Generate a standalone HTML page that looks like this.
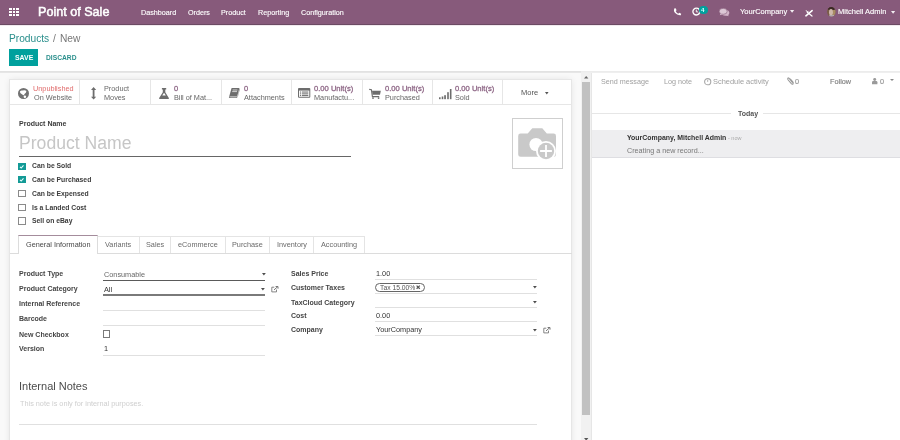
<!DOCTYPE html>
<html><head><meta charset="utf-8"><style>
html,body{margin:0;padding:0;width:900px;height:440px;overflow:hidden;background:#fff;position:relative;font-family:"Liberation Sans",sans-serif;}
.t{position:absolute;white-space:nowrap;line-height:1;will-change:transform;}
.r{position:absolute;}
svg{position:absolute;overflow:visible;}
</style></head><body>
<div class="r" style="left:0px;top:24px;width:900px;height:416px;background:#ffffff;"></div>
<div class="r" style="left:0px;top:0px;width:900px;height:24px;background:#875a7b;"></div>
<div class="r" style="left:0px;top:23.6px;width:900px;height:1.1px;background:#6b4a63;"></div>
<div class="r" style="left:0px;top:24.7px;width:900px;height:1px;background:#f1e9ee;"></div>
<div class="r" style="left:0px;top:71px;width:581px;height:1px;background:#e2e2e2;"></div>
<div class="r" style="left:0px;top:72px;width:581px;height:1px;background:#e6e6e6;"></div>
<div class="r" style="left:581px;top:71px;width:319px;height:1px;background:#ececec;"></div>
<div class="r" style="left:581px;top:72px;width:319px;height:1px;background:#efefef;"></div>
<div class="r" style="left:0px;top:73px;width:582px;height:367px;background:#f9f9f9;"></div>
<div class="r" style="left:9.2px;top:79px;width:563.3px;height:380px;background:#ffffff;border:1px solid #e6e6e6;box-sizing:border-box;box-shadow:0 0 7px -1px rgba(0,0,0,0.10);"></div>
<div class="r" style="left:581px;top:73px;width:10px;height:367px;background:#f1f1f1;"></div>
<div class="r" style="left:582px;top:82px;width:8px;height:333px;background:#c1c1c1;"></div>
<div class="r" style="left:591px;top:73px;width:309px;height:367px;background:#ffffff;border-left:1px solid #e6e6e6;box-sizing:border-box;"></div>
<div class="r" style="left:9.0px;top:8.0px;width:2.8px;height:2.2px;background:#ffffff;"></div>
<div class="r" style="left:9.0px;top:10.9px;width:2.8px;height:2.2px;background:#ffffff;"></div>
<div class="r" style="left:9.0px;top:13.8px;width:2.8px;height:2.2px;background:#ffffff;"></div>
<div class="r" style="left:12.6px;top:8.0px;width:2.8px;height:2.2px;background:#ffffff;"></div>
<div class="r" style="left:12.6px;top:10.9px;width:2.8px;height:2.2px;background:#ffffff;"></div>
<div class="r" style="left:12.6px;top:13.8px;width:2.8px;height:2.2px;background:#ffffff;"></div>
<div class="r" style="left:16.2px;top:8.0px;width:2.8px;height:2.2px;background:#ffffff;"></div>
<div class="r" style="left:16.2px;top:10.9px;width:2.8px;height:2.2px;background:#ffffff;"></div>
<div class="r" style="left:16.2px;top:13.8px;width:2.8px;height:2.2px;background:#ffffff;"></div>
<div class="t" style="left:38px;top:5.93px;font-size:12.6px;color:#ffffff;-webkit-text-stroke:0.5px #fff;">Point of Sale</div>
<div class="t" style="left:140.8px;top:8.81px;font-size:7.2px;color:#fff;-webkit-text-stroke:0.12px #fff;">Dashboard</div>
<div class="t" style="left:188px;top:8.81px;font-size:7.2px;color:#fff;-webkit-text-stroke:0.12px #fff;">Orders</div>
<div class="t" style="left:220.8px;top:8.81px;font-size:7.2px;color:#fff;-webkit-text-stroke:0.12px #fff;">Product</div>
<div class="t" style="left:257.9px;top:8.81px;font-size:7.2px;color:#fff;-webkit-text-stroke:0.12px #fff;">Reporting</div>
<div class="t" style="left:300.8px;top:8.81px;font-size:7.2px;color:#fff;-webkit-text-stroke:0.12px #fff;">Configuration</div>
<div class="t" style="left:739.7px;top:8.45px;font-size:7.5px;color:#fff;-webkit-text-stroke:0.12px #fff;">YourCompany</div>
<div class="t" style="left:837.7px;top:8.45px;font-size:7.5px;color:#fff;-webkit-text-stroke:0.12px #fff;">Mitchell Admin</div>
<div class="t" style="left:8.9px;top:33.77px;font-size:10.2px;color:#2a8f8c;">Products</div>
<div class="t" style="left:53.4px;top:33.77px;font-size:10.2px;color:#777;">/</div>
<div class="t" style="left:60.4px;top:33.77px;font-size:10.2px;color:#777;">New</div>
<div class="r" style="left:9px;top:49px;width:29px;height:17px;background:#00a09d;"></div>
<div class="t" style="left:14.8px;top:54.66px;font-size:6.9px;color:#ffffff;font-weight:700;">SAVE</div>
<div class="t" style="left:46px;top:54.83px;font-size:6.7px;color:#2a8f8c;font-weight:700;">DISCARD</div>
<div class="r" style="left:79.2px;top:80px;width:1px;height:24px;background:#e6e6e6;"></div>
<div class="r" style="left:150.3px;top:80px;width:1px;height:24px;background:#e6e6e6;"></div>
<div class="r" style="left:220.8px;top:80px;width:1px;height:24px;background:#e6e6e6;"></div>
<div class="r" style="left:291.3px;top:80px;width:1px;height:24px;background:#e6e6e6;"></div>
<div class="r" style="left:361.7px;top:80px;width:1px;height:24px;background:#e6e6e6;"></div>
<div class="r" style="left:431.8px;top:80px;width:1px;height:24px;background:#e6e6e6;"></div>
<div class="r" style="left:502.2px;top:80px;width:1px;height:24px;background:#e6e6e6;"></div>
<div class="r" style="left:10px;top:103.5px;width:562px;height:1px;background:#e6e6e6;"></div>
<div class="t" style="left:33.2px;top:84.82px;font-size:7.3px;color:#e06c6c;">Unpublished</div>
<div class="t" style="left:33.8px;top:93.52px;font-size:7.3px;color:#666;">On Website</div>
<div class="t" style="left:103.6px;top:84.82px;font-size:7.3px;color:#6a6a6a;">Product</div>
<div class="t" style="left:103.6px;top:93.52px;font-size:7.3px;color:#666;">Moves</div>
<div class="t" style="left:174.2px;top:84.65px;font-size:7.5px;color:#8f6887;-webkit-text-stroke:0.3px #8f6887;">0</div>
<div class="t" style="left:174.2px;top:93.52px;font-size:7.3px;color:#666;">Bill of Mat...</div>
<div class="t" style="left:244.2px;top:84.65px;font-size:7.5px;color:#8f6887;-webkit-text-stroke:0.3px #8f6887;">0</div>
<div class="t" style="left:244.2px;top:93.52px;font-size:7.3px;color:#666;">Attachments</div>
<div class="t" style="left:314.4px;top:84.57px;font-size:7.6px;color:#8f6887;-webkit-text-stroke:0.3px #8f6887;">0.00 Unit(s)</div>
<div class="t" style="left:314.4px;top:93.52px;font-size:7.3px;color:#666;">Manufactu...</div>
<div class="t" style="left:385px;top:84.57px;font-size:7.6px;color:#8f6887;-webkit-text-stroke:0.3px #8f6887;">0.00 Unit(s)</div>
<div class="t" style="left:385px;top:93.52px;font-size:7.3px;color:#666;">Purchased</div>
<div class="t" style="left:455.4px;top:84.57px;font-size:7.6px;color:#8f6887;-webkit-text-stroke:0.3px #8f6887;">0.00 Unit(s)</div>
<div class="t" style="left:455.4px;top:93.52px;font-size:7.3px;color:#666;">Sold</div>
<div class="t" style="left:521px;top:88.95px;font-size:7.5px;color:#555;">More</div>
<div class="t" style="left:18.7px;top:119.87px;font-size:7px;color:#3c3c3c;font-weight:700;">Product Name</div>
<div class="t" style="left:18.6px;top:135.10px;font-size:17.6px;color:#c6c6c6;">Product Name</div>
<div class="r" style="left:18.7px;top:155.8px;width:332.5px;height:1.5px;background:#666;"></div>
<div class="r" style="left:512px;top:118px;width:51px;height:51px;background:#fff;border:1px solid #cfcfcf;box-sizing:border-box;"></div>
<div class="r" style="left:18.3px;top:162.5px;width:7.4px;height:7.4px;background:#139a96;"></div>
<div class="t" style="left:31.8px;top:163.14px;font-size:6.8px;color:#3c3c3c;font-weight:700;">Can be Sold</div>
<div class="r" style="left:18.3px;top:176.0px;width:7.4px;height:7.4px;background:#139a96;"></div>
<div class="t" style="left:31.8px;top:176.84px;font-size:6.8px;color:#3c3c3c;font-weight:700;">Can be Purchased</div>
<div class="r" style="left:18.3px;top:189.8px;width:7.4px;height:7.4px;background:#fff;border:1px solid #8a8a8a;box-sizing:border-box;"></div>
<div class="t" style="left:31.8px;top:190.74px;font-size:6.8px;color:#3c3c3c;font-weight:700;">Can be Expensed</div>
<div class="r" style="left:18.3px;top:203.60000000000002px;width:7.4px;height:7.4px;background:#fff;border:1px solid #8a8a8a;box-sizing:border-box;"></div>
<div class="t" style="left:31.8px;top:204.84px;font-size:6.8px;color:#3c3c3c;font-weight:700;">Is a Landed Cost</div>
<div class="r" style="left:18.3px;top:217.3px;width:7.4px;height:7.4px;background:#fff;border:1px solid #8a8a8a;box-sizing:border-box;"></div>
<div class="t" style="left:31.8px;top:218.04px;font-size:6.8px;color:#3c3c3c;font-weight:700;">Sell on eBay</div>
<div class="r" style="left:9.5px;top:252.5px;width:562.5px;height:1px;background:#dcdcdc;"></div>
<div class="r" style="left:18.3px;top:235px;width:79.7px;height:18.5px;background:#fff;border:1px solid #dcdcdc;border-bottom:none;border-top:1px solid #a48c9c;box-sizing:border-box;"></div>
<div class="t" style="left:26px;top:241.12px;font-size:7.3px;color:#484848;">General Information</div>
<div class="r" style="left:98px;top:235.5px;width:41.599999999999994px;height:17.5px;background:#fff;border:1px solid #e4e4e4;border-left:none;border-bottom:none;box-sizing:border-box;"></div>
<div class="t" style="left:105px;top:241.12px;font-size:7.3px;color:#6a6a6a;">Variants</div>
<div class="r" style="left:139.6px;top:235.5px;width:31.400000000000006px;height:17.5px;background:#fff;border:1px solid #e4e4e4;border-left:none;border-bottom:none;box-sizing:border-box;"></div>
<div class="t" style="left:146.4px;top:241.12px;font-size:7.3px;color:#6a6a6a;">Sales</div>
<div class="r" style="left:171px;top:235.5px;width:54.5px;height:17.5px;background:#fff;border:1px solid #e4e4e4;border-left:none;border-bottom:none;box-sizing:border-box;"></div>
<div class="t" style="left:178.3px;top:241.12px;font-size:7.3px;color:#6a6a6a;">eCommerce</div>
<div class="r" style="left:225.5px;top:235.5px;width:44.5px;height:17.5px;background:#fff;border:1px solid #e4e4e4;border-left:none;border-bottom:none;box-sizing:border-box;"></div>
<div class="t" style="left:232px;top:241.12px;font-size:7.3px;color:#6a6a6a;">Purchase</div>
<div class="r" style="left:270px;top:235.5px;width:43.5px;height:17.5px;background:#fff;border:1px solid #e4e4e4;border-left:none;border-bottom:none;box-sizing:border-box;"></div>
<div class="t" style="left:277px;top:241.12px;font-size:7.3px;color:#6a6a6a;">Inventory</div>
<div class="r" style="left:313.5px;top:235.5px;width:51.89999999999998px;height:17.5px;background:#fff;border:1px solid #e4e4e4;border-left:none;border-bottom:none;box-sizing:border-box;"></div>
<div class="t" style="left:320.9px;top:241.12px;font-size:7.3px;color:#6a6a6a;">Accounting</div>
<div class="t" style="left:18.6px;top:269.77px;font-size:7px;color:#454545;font-weight:700;">Product Type</div>
<div class="t" style="left:18.6px;top:285.17px;font-size:7px;color:#454545;font-weight:700;">Product Category</div>
<div class="t" style="left:18.6px;top:300.17px;font-size:7px;color:#454545;font-weight:700;">Internal Reference</div>
<div class="t" style="left:18.6px;top:315.37px;font-size:7px;color:#454545;font-weight:700;">Barcode</div>
<div class="t" style="left:18.6px;top:330.57px;font-size:7px;color:#454545;font-weight:700;">New Checkbox</div>
<div class="t" style="left:18.6px;top:344.57px;font-size:7px;color:#454545;font-weight:700;">Version</div>
<div class="t" style="left:103.5px;top:270.82px;font-size:7.3px;color:#666;">Consumable</div>
<div class="r" style="left:103px;top:279.5px;width:162px;height:1.5px;background:#5a5a5a;"></div>
<div class="t" style="left:103.5px;top:286.12px;font-size:7.3px;color:#333;">All</div>
<div class="r" style="left:103px;top:294.3px;width:162px;height:2px;background:#7a7a7a;"></div>
<div class="r" style="left:103px;top:309.7px;width:162px;height:1px;background:#e0e0e0;"></div>
<div class="r" style="left:103px;top:325.2px;width:162px;height:1px;background:#e0e0e0;"></div>
<div class="r" style="left:102.7px;top:330.4px;width:7.8px;height:7.6px;background:#fff;border:1px solid #7a7a7a;box-sizing:border-box;"></div>
<div class="t" style="left:103.5px;top:344.82px;font-size:7.3px;color:#333;">1</div>
<div class="r" style="left:103px;top:355.2px;width:162px;height:1px;background:#e0e0e0;"></div>
<div class="t" style="left:290.6px;top:270.17px;font-size:7px;color:#454545;font-weight:700;">Sales Price</div>
<div class="t" style="left:290.6px;top:283.97px;font-size:7px;color:#454545;font-weight:700;">Customer Taxes</div>
<div class="t" style="left:290.6px;top:298.67px;font-size:7px;color:#454545;font-weight:700;">TaxCloud Category</div>
<div class="t" style="left:290.6px;top:312.17px;font-size:7px;color:#454545;font-weight:700;">Cost</div>
<div class="t" style="left:290.6px;top:325.97px;font-size:7px;color:#454545;font-weight:700;">Company</div>
<div class="t" style="left:375.5px;top:270.12px;font-size:7.3px;color:#333;">1.00</div>
<div class="r" style="left:375px;top:278.7px;width:161.5px;height:1px;background:#e0e0e0;"></div>
<div class="r" style="left:375.4px;top:282.6px;width:50px;height:9.7px;background:transparent;border:1px solid #666;border-radius:5px;box-sizing:border-box;"></div>
<div class="t" style="left:379.8px;top:284.59px;font-size:6.75px;color:#555;">Tax 15.00%</div>
<svg style="left:416.3px;top:285.4px" width="4.4" height="4.4" viewBox="0 0 4.4 4.4"><path d="M0.6,0.6 L3.8,3.8 M3.8,0.6 L0.6,3.8" stroke="#555" stroke-width="1.2"/></svg>
<div class="r" style="left:375px;top:292.7px;width:161.5px;height:1px;background:#e0e0e0;"></div>
<div class="r" style="left:375px;top:307.3px;width:161.5px;height:1px;background:#e0e0e0;"></div>
<div class="t" style="left:375.5px;top:312.12px;font-size:7.3px;color:#333;">0.00</div>
<div class="r" style="left:375px;top:321.2px;width:161.5px;height:1px;background:#e0e0e0;"></div>
<div class="t" style="left:375.5px;top:326.32px;font-size:7.3px;color:#333;">YourCompany</div>
<div class="r" style="left:375px;top:335.4px;width:161.5px;height:1px;background:#e0e0e0;"></div>
<div class="t" style="left:19.2px;top:380.69px;font-size:11px;color:#4c4c4c;">Internal Notes</div>
<div class="t" style="left:20px;top:400.12px;font-size:7.3px;color:#cfcfcf;">This note is only for internal purposes.</div>
<div class="r" style="left:18.7px;top:424.2px;width:518.5px;height:1px;background:#e0e0e0;"></div>
<div class="t" style="left:600.7px;top:78.11px;font-size:7.2px;color:#a0a0a0;">Send message</div>
<div class="t" style="left:664.3px;top:78.11px;font-size:7.2px;color:#a0a0a0;">Log note</div>
<div class="t" style="left:712.8px;top:77.89px;font-size:7.45px;color:#a0a0a0;">Schedule activity</div>
<div class="t" style="left:795px;top:78.02px;font-size:7.3px;color:#999;-webkit-text-stroke:0.2px #999;">0</div>
<div class="t" style="left:829.8px;top:77.82px;font-size:7.3px;color:#808080;-webkit-text-stroke:0.15px #808080;">Follow</div>
<div class="t" style="left:879.6px;top:78.02px;font-size:7.3px;color:#999;-webkit-text-stroke:0.2px #999;">0</div>
<div class="r" style="left:591px;top:112.7px;width:140px;height:1px;background:#e6e6e6;"></div>
<div class="r" style="left:763px;top:112.7px;width:137px;height:1px;background:#e6e6e6;"></div>
<div class="t" style="left:737.5px;top:110.37px;font-size:7.0px;color:#555;font-weight:700;">Today</div>
<div class="r" style="left:592px;top:130px;width:308px;height:27px;background:#eeeef0;"></div>
<div class="r" style="left:592px;top:156.5px;width:308px;height:1px;background:#dedee2;"></div>
<div class="t" style="left:626.6px;top:134.72px;font-size:6.95px;color:#333;font-weight:700;">YourCompany, Mitchell Admin</div>
<div class="t" style="left:727.6px;top:135.94px;font-size:5.5px;color:#aaa;">- now</div>
<div class="t" style="left:626.6px;top:146.51px;font-size:7.2px;color:#777;">Creating a new record...</div>
<svg style="left:672.5px;top:8px" width="8.5" height="7.5" viewBox="0 0 8.5 7.5"><path d="M1.2,0.6 L2.6,0.2 L3.6,2.3 L2.6,3.1 Q3.6,5 5.3,5.8 L6.2,4.8 L8.2,5.8 L7.8,7.2 Q4.2,7.6 1.9,4.8 Q0.4,2.7 1.2,0.6 Z" fill="#fff"/></svg>
<svg style="left:691.8px;top:6.9px" width="9" height="9" viewBox="0 0 9 9"><circle cx="4.3" cy="4.6" r="3.4" fill="none" stroke="#fff" stroke-width="1.3"/><path d="M4.3,2.6 V4.9 H6" fill="none" stroke="#fff" stroke-width="0.9"/></svg>
<div class="r" style="left:698.6px;top:5.7px;width:9.4px;height:8.3px;background:#00a09d;border-radius:4.2px;"></div>
<div class="t" style="left:701.3px;top:7.35px;font-size:6.2px;color:#d8ffff;font-weight:700;">4</div>
<svg style="left:719px;top:7.6px" width="10.5" height="8.5" viewBox="0 0 10.5 8.5"><ellipse cx="6.5" cy="4.8" rx="3.8" ry="2.9" fill="#d3b3c8"/><path d="M8.5,6.5 L10,8.3 L6.8,7.3 Z" fill="#d3b3c8"/><ellipse cx="4.2" cy="3.3" rx="4" ry="3" fill="#dcc6d5" stroke="#875a7b" stroke-width="0.6"/><path d="M1.8,5.2 L0.8,7.3 L4,6 Z" fill="#dcc6d5"/></svg>
<svg style="left:789.7px;top:10.3px" width="4.2" height="2.8" viewBox="0 0 4.2 2.8"><path d="M0,0 H4.2 L2.1,2.8 Z" fill="#f3eef2"/></svg>
<svg style="left:890.8px;top:10.5px" width="4.2" height="2.8" viewBox="0 0 4.2 2.8"><path d="M0,0 H4.2 L2.1,2.8 Z" fill="#f3eef2"/></svg>
<svg style="left:804.5px;top:8.5px" width="8" height="8" viewBox="0 0 8 8"><path d="M0.9,6.8 L7.1,1.6" stroke="#fff" stroke-width="1.6" stroke-linecap="round"/><path d="M2.3,3.2 L7,7" stroke="#fff" stroke-width="1.2" stroke-linecap="round"/><path d="M1,1.2 L2.4,3.1 L3.4,1.9" fill="none" stroke="#fff" stroke-width="0.9"/></svg>
<svg style="left:826.7px;top:6.6px" width="8.6" height="9.6" viewBox="0 0 8.6 9.6"><defs><clipPath id="av"><ellipse cx="4.3" cy="4.8" rx="4.3" ry="4.75"/></clipPath></defs><g clip-path="url(#av)"><rect width="9" height="10" fill="#7a5c48"/><rect x="5.6" y="2.5" width="4" height="8" fill="#a78c62"/><ellipse cx="4.5" cy="1" rx="4.2" ry="2.2" fill="#3a2824"/><ellipse cx="4" cy="5.2" rx="2" ry="3.2" fill="#cfb8aa"/><rect x="2.2" y="8.2" width="5" height="2" fill="#b9b4bd"/></g></svg>
<svg style="left:18px;top:88.1px" width="11" height="11" viewBox="0 0 11 11"><circle cx="5.5" cy="5.5" r="5.5" fill="#727272"/><path d="M1.9,3.5 Q3.2,1.9 4.8,2.6 Q6.8,1.7 8.4,3 Q8.3,5.1 6.5,6.1 Q5.8,7.9 5,7.1 Q3.5,6.3 2.3,5.1 Z" fill="#fff"/><circle cx="6.9" cy="8.7" r="1.25" fill="#fff"/></svg>
<svg style="left:90.9px;top:87.2px" width="5.2" height="12.6" viewBox="0 0 5.2 12.6"><path d="M2.6,0 L5.2,2.9 H3.5 V9.7 H5.2 L2.6,12.6 L0,9.7 H1.7 V2.9 H0 Z" fill="#6d6d6d"/></svg>
<svg style="left:158.9px;top:87.9px" width="10" height="11" viewBox="0 0 10 11"><path d="M2.9,0 H7.2 V1.6 H6.3 V4.2 L10,10.2 Q10,11 9.2,11 H0.8 Q0,11 0,10.2 L3.8,4.2 V1.6 H2.9 Z" fill="#6d6d6d"/><path d="M3.3,7.6 L4.6,5.3 H5.5 L6.8,7.6 Z" fill="#fff"/></svg>
<svg style="left:228.8px;top:88.4px" width="11.2" height="10.2" viewBox="0 0 11.2 10.2"><path d="M2.6,0 H10.4 L8.2,8.6 H0.2 Z" fill="#6d6d6d"/><path d="M0.2,8.6 H8.2 L8,10 H0.6 Q-0.6,9.4 0.2,8.6 Z" fill="#6d6d6d"/><path d="M1.2,9 H7.8" stroke="#fff" stroke-width="0.6"/><path d="M3.6,2 H8.4 M3.2,3.6 H8" stroke="#fff" stroke-width="0.7"/><path d="M10.4,0.6 L10.9,1 L8.7,9.6 L8.4,9.4" fill="#888"/></svg>
<svg style="left:298.1px;top:88.1px" width="12.3" height="9.8" viewBox="0 0 12.3 9.8"><rect x="0" y="0" width="12.3" height="9.8" rx="1" fill="#6d6d6d"/><rect x="1" y="2.6" width="10.3" height="6.2" fill="#fff"/><rect x="1.9" y="3.5" width="1.2" height="1.1" fill="#777"/><rect x="1.9" y="5.3" width="1.2" height="1.1" fill="#777"/><rect x="1.9" y="7" width="1.2" height="1.1" fill="#777"/><rect x="3.9" y="3.5" width="6.4" height="1.1" fill="#777"/><rect x="3.9" y="5.3" width="6.4" height="1.1" fill="#777"/><rect x="3.9" y="7" width="6.4" height="1.1" fill="#777"/></svg>
<svg style="left:368.8px;top:88.8px" width="12" height="10" viewBox="0 0 12 10"><path d="M0.2,0.4 L2.4,0.8 L3.4,7.6 H10.2" fill="none" stroke="#6d6d6d" stroke-width="1.1"/><path d="M3,1.8 H11.8 L11,5.8 H3.5 Z" fill="#6d6d6d"/><circle cx="4" cy="9.1" r="0.9" fill="#6d6d6d"/><circle cx="9.6" cy="9.1" r="0.9" fill="#6d6d6d"/></svg>
<svg style="left:438.8px;top:88.8px" width="12.6" height="10.2" viewBox="0 0 12.6 10.2"><rect x="0" y="8.3" width="1.6" height="1.9" fill="#6d6d6d"/><rect x="2.7" y="7.5" width="1.6" height="2.7" fill="#6d6d6d"/><rect x="5.2" y="6.2" width="1.7" height="4" fill="#6d6d6d"/><rect x="8.2" y="3.2" width="1.6" height="7" fill="#6d6d6d"/><rect x="10.9" y="0" width="1.6" height="10.2" fill="#6d6d6d"/></svg>
<svg style="left:545px;top:92.2px" width="3.6" height="2.4" viewBox="0 0 3.6 2.4"><path d="M0,0 H3.6 L1.8,2.4 Z" fill="#555"/></svg>
<svg style="left:518px;top:128px" width="40" height="34" viewBox="0 0 40 34"><path d="M14.3,0.2 H24.3 L28.8,5.6 H35.6 Q38,5.6 38,8 V26.4 Q38,28.8 35.6,28.8 H2.6 Q0.2,28.8 0.2,26.4 V8 Q0.2,5.6 2.6,5.6 H9.7 Z" fill="#c9c9c9"/><circle cx="18" cy="16.5" r="6.6" fill="#fff"/><circle cx="28" cy="23" r="10" fill="#fff"/><circle cx="28" cy="23" r="8.2" fill="#c9c9c9"/><path d="M28,17.1 V28.9 M22.1,23 H33.9" stroke="#fff" stroke-width="1.8"/></svg>
<svg style="left:18.3px;top:162.5px" width="7.4" height="7.4" viewBox="0 0 7.4 7.4"><path d="M2,3.8 L3.2,5 L5.5,2.4" fill="none" stroke="#e8fffe" stroke-width="1.1"/></svg>
<svg style="left:18.3px;top:176.0px" width="7.4" height="7.4" viewBox="0 0 7.4 7.4"><path d="M2,3.8 L3.2,5 L5.5,2.4" fill="none" stroke="#e8fffe" stroke-width="1.1"/></svg>
<svg style="left:261.6px;top:272.8px" width="3.8" height="2.4" viewBox="0 0 3.8 2.4"><path d="M0,0 H3.8 L1.9,2.4 Z" fill="#4c4c4c"/></svg>
<svg style="left:261.4px;top:288.2px" width="3.8" height="2.4" viewBox="0 0 3.8 2.4"><path d="M0,0 H3.8 L1.9,2.4 Z" fill="#4c4c4c"/></svg>
<svg style="left:532.7px;top:286.1px" width="3.8" height="2.4" viewBox="0 0 3.8 2.4"><path d="M0,0 H3.8 L1.9,2.4 Z" fill="#4c4c4c"/></svg>
<svg style="left:532.7px;top:301.1px" width="3.8" height="2.4" viewBox="0 0 3.8 2.4"><path d="M0,0 H3.8 L1.9,2.4 Z" fill="#4c4c4c"/></svg>
<svg style="left:532.7px;top:328.5px" width="3.8" height="2.4" viewBox="0 0 3.8 2.4"><path d="M0,0 H3.8 L1.9,2.4 Z" fill="#4c4c4c"/></svg>
<svg style="left:271.3px;top:286px" width="7.5" height="6.5" viewBox="0 0 7.5 6.5"><path d="M3.3,1.2 H0.8 V5.9 H5.5 V3.6" fill="none" stroke="#777" stroke-width="0.9"/><path d="M3,3.9 L6.8,0.6 M4.6,0.5 H7 V2.7" fill="none" stroke="#777" stroke-width="1"/></svg>
<svg style="left:543.2px;top:326.6px" width="7.5" height="6.5" viewBox="0 0 7.5 6.5"><path d="M3.3,1.2 H0.8 V5.9 H5.5 V3.6" fill="none" stroke="#777" stroke-width="0.9"/><path d="M3,3.9 L6.8,0.6 M4.6,0.5 H7 V2.7" fill="none" stroke="#777" stroke-width="1"/></svg>
<svg style="left:703.8px;top:77.6px" width="7.4" height="7.4" viewBox="0 0 7.4 7.4"><circle cx="3.7" cy="3.7" r="3.1" fill="none" stroke="#a8a8a8" stroke-width="1.1"/><path d="M3.7,1.8 V3.9" stroke="#a8a8a8" stroke-width="0.9"/></svg>
<svg style="left:786.9px;top:76.9px" width="6.6" height="7.2" viewBox="0 0 6.6 7.2"><path d="M5.6,5.6 L2.4,1.6 Q1.5,0.5 0.9,1.2 Q0.3,1.9 1.2,3 L4.3,6.6 Q5.4,7.6 6.1,6.8 Q6.6,6 5.8,4.9 L3.2,1.9" fill="none" stroke="#999" stroke-width="1.1"/></svg>
<svg style="left:872px;top:77.6px" width="5.4" height="6.3" viewBox="0 0 5.4 6.3"><circle cx="2.7" cy="1.5" r="1.5" fill="#9a9a9a"/><path d="M0,6.3 V4.3 Q0,3.1 1.2,3.1 H4.2 Q5.4,3.1 5.4,4.3 V6.3 Z" fill="#9a9a9a"/></svg>
<svg style="left:890px;top:78.9px" width="4" height="2" viewBox="0 0 4 2"><path d="M0,0 H4 L2,2 Z" fill="#888"/></svg>
<svg style="left:583.8px;top:76.2px" width="4.4" height="2.6" viewBox="0 0 4.4 2.6"><path d="M0,2.6 H4.4 L2.2,0 Z" fill="#666"/></svg>
<svg style="left:583.8px;top:437.8px" width="4.4" height="2.6" viewBox="0 0 4.4 2.6"><path d="M0,0 H4.4 L2.2,2.6 Z" fill="#555"/></svg>
</body></html>
